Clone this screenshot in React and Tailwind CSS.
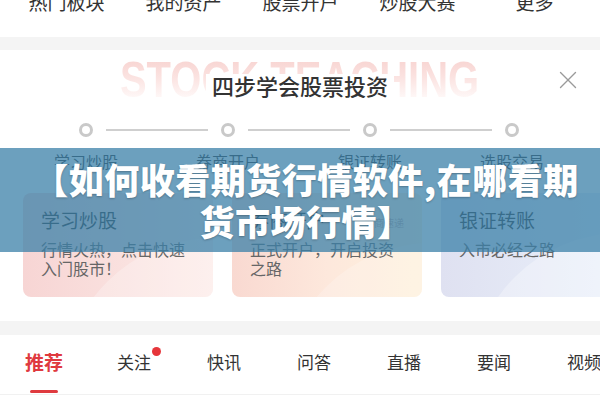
const navItems = ["热门板块", "我的资产", "股票开户", "炒股大赛", "更多"];
const steps = ["学习炒股", "券商开户", "银证转账", "选股交易"];
const tabs = ["推荐", "关注", "快讯", "问答", "直播", "要闻", "视频"];

function CloseIcon() {
  return (
    <svg width="18" height="18" viewBox="0 0 18 18" fill="none" stroke="#9a9a9a" strokeWidth="1.4" strokeLinecap="round">
      <path d="M1.5 1.5 L16.5 16.5" />
      <path d="M16.5 1.5 L1.5 16.5" />
    </svg>
  );
}

function StepDot() {
  return <div className="w-[14px] h-[14px] rounded-full border-[3px] border-[#c9c9c9] bg-white shrink-0" />;
}

function Card({ className, title, tag, lines, glow }) {
  return (
    <div className={`relative w-[190px] h-[104px] shrink-0 rounded-[8px] overflow-hidden ${className}`}>
      <div className={`absolute rounded-full w-[300px] h-[300px] ${glow}`} />
      <div className="relative px-[18px] pt-[17px]">
        <div className="flex items-center justify-between">
          <span className="text-[19px] leading-[24px] text-[#333]">{title}</span>
          {tag && <span className="text-[10px] leading-[12px] text-[#c7aaa2] mt-[4px]">{tag}</span>}
        </div>
        <div className="mt-[7px] text-[16px] leading-[19px] text-[#666]">
          {lines.map((l, i) => (
            <div key={i} className="whitespace-nowrap">{l}</div>
          ))}
        </div>
      </div>
    </div>
  );
}

export default function App() {
  return (
    <div className="relative w-[600px] h-[400px] overflow-hidden bg-white font-['Liberation_Sans','Noto_Sans_CJK_SC',sans-serif]">
      {/* top shortcuts */}
      <div className="h-[37px] overflow-hidden">
        <div className="grid grid-cols-5 w-[585px] ml-[8px] -mt-[8px] text-[19px] leading-[24px] text-[#333]">
          {navItems.map((n) => (
            <div key={n} className="text-center">{n}</div>
          ))}
        </div>
      </div>
      <div className="h-[13px] bg-[#f4f4f4]" />

      {/* teaching panel */}
      <section className="h-[271px] bg-white">
        <div className="grid h-[64px]">
          <div className="[grid-area:1/1] self-start justify-self-center pt-[5px] text-[50px] leading-[50px] font-bold scale-x-[0.8] bg-gradient-to-b from-[#f6cdca] via-[#fbe3e1] to-white bg-clip-text text-transparent">
            STOCK TEACHING
          </div>
          <div className="relative z-10 [grid-area:1/1] self-start justify-self-center mt-[24px] px-[6px] bg-white text-[22px] leading-[28px] font-medium text-[#333]">
            四步学会股票投资
          </div>
          <div className="relative z-10 [grid-area:1/1] self-start justify-self-end mt-[21px] mr-[23px]">
            <CloseIcon />
          </div>
        </div>

        <div className="flex items-center w-[440px] ml-[79px] mt-[9px]">
          <StepDot />
          <div className="flex-1 mx-[13px] h-[2px] bg-[#cfcfcf]" />
          <StepDot />
          <div className="flex-1 mx-[13px] h-[2px] bg-[#cfcfcf]" />
          <StepDot />
          <div className="flex-1 mx-[13px] h-[2px] bg-[#cfcfcf]" />
          <StepDot />
        </div>

        <div className="grid grid-cols-4 w-[568px] ml-[15px] mt-[16px] text-[16px] leading-[20px] text-[#333]">
          {steps.map((s) => (
            <div key={s} className="text-center">{s}</div>
          ))}
        </div>

        <div className="flex gap-[19px] pl-[23px] mt-[20px]">
          <Card
            className="bg-gradient-to-r from-[#f7d5d4] to-[#fcebe8]"
            glow="bg-white/25 left-[40px] top-[45px]"
            title="学习炒股"
            lines={["行情火热，点击快速", "入门股市！"]}
          />
          <Card
            className="bg-gradient-to-r from-[#f9d9d1] via-[#fde8dc] to-[#fef1dc]"
            glow="bg-white/20 left-[50px] top-[50px]"
            title="券商开户"
            tag="券商速递"
            lines={["正式开户，开启投资", "之路"]}
          />
          <Card
            className="bg-gradient-to-r from-[#dfe1f1] to-[#eaf1fb]"
            glow="bg-white/30 left-[30px] top-[40px]"
            title="银证转账"
            lines={["入市必经之路"]}
          />
        </div>
      </section>

      <div className="h-[14px] bg-[#f4f4f4]" />

      {/* news tabs */}
      <div className="h-[59px] overflow-hidden">
        <div className="flex -ml-[1px] pt-[17px]">
          {tabs.map((t, i) => (
            <div key={t} className="w-[90px] shrink-0 flex flex-col items-center">
              {i === 0 ? (
                <>
                  <span className="text-[19px] leading-[24px] font-semibold text-[#df3a3f]">{t}</span>
                  <span className="mt-[14px] w-[28px] h-[3px] rounded-full bg-[#df3a3f]" />
                </>
              ) : (
                <span className="relative text-[17px] leading-[24px] text-[#333]">
                  {t}
                  {i === 1 && (
                    <span className="absolute left-full ml-[1px] top-[-5px] w-[9px] h-[9px] rounded-full bg-[#e6363b]" />
                  )}
                </span>
              )}
            </div>
          ))}
        </div>
      </div>
      <div className="h-px bg-[#f1f1f1]" />

      {/* headline banner */}
      <div className="absolute z-20 left-0 top-[148px] w-full h-[104px] bg-[rgba(59,128,168,0.75)] flex items-center justify-center pl-[12px]">
        <div className="text-center text-white text-[35px] leading-[42px] tracking-[0.5px] font-black font-['Noto_Sans_CJK_SC',sans-serif] [text-shadow:0_1px_2px_rgba(0,0,0,0.25)]">
          【如何收看期货行情软件,在哪看期
          <br />
          货市场行情】
        </div>
      </div>
    </div>
  );
}
